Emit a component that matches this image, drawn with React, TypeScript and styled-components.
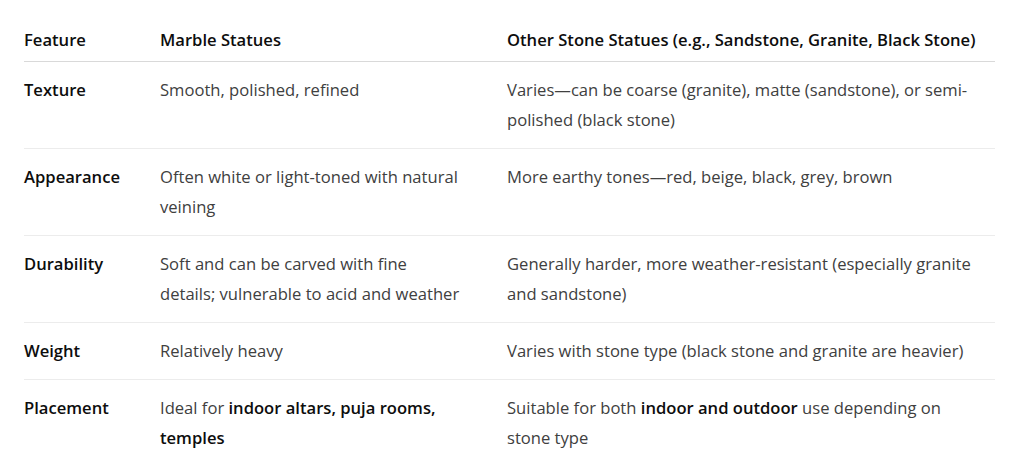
import styled, { createGlobalStyle } from "styled-components";

const GlobalStyle = createGlobalStyle`
  body {
    margin: 0;
    background: #ffffff;
    font-family: "Open Sans", "Noto Sans", "Liberation Sans", sans-serif;
  }
`;

const Page = styled.div`
  padding: 13px 0 0 24px;
`;

const Table = styled.table`
  width: 971px;
  table-layout: fixed;
  border-collapse: collapse;
  font-size: 16.6px;
  line-height: 30px;
`;

const HeadCell = styled.th<{ $width?: number }>`
  width: ${(p) => (p.$width ? `${p.$width}px` : "auto")};
  text-align: left;
  font-weight: 600;
  color: #0d0d0d;
  padding: 12px 0 6px;
  border-bottom: 1px solid #d9d9d9;
`;

const Row = styled.tr`
  & + & td {
    border-top: 1px solid #ececec;
  }
`;

const Cell = styled.td<{ $label?: boolean }>`
  vertical-align: top;
  padding: 13px 0 13px;
  font-weight: ${(p) => (p.$label ? 600 : 400)};
  color: ${(p) => (p.$label ? "#0d0d0d" : "#404040")};
  b {
    font-weight: 600;
    color: #0d0d0d;
  }
`;

interface RowData {
  feature: string;
  marble: React.ReactNode;
  other: React.ReactNode;
}

const rows: RowData[] = [
  {
    feature: "Texture",
    marble: "Smooth, polished, refined",
    other: (
      <>
        Varies—can be coarse (granite), matte (sandstone), or semi-
        <br />
        polished (black stone)
      </>
    ),
  },
  {
    feature: "Appearance",
    marble: (
      <>
        Often white or light-toned with natural
        <br />
        veining
      </>
    ),
    other: "More earthy tones—red, beige, black, grey, brown",
  },
  {
    feature: "Durability",
    marble: (
      <>
        Soft and can be carved with fine
        <br />
        details; vulnerable to acid and weather
      </>
    ),
    other: (
      <>
        Generally harder, more weather-resistant (especially granite
        <br />
        and sandstone)
      </>
    ),
  },
  {
    feature: "Weight",
    marble: "Relatively heavy",
    other: "Varies with stone type (black stone and granite are heavier)",
  },
  {
    feature: "Placement",
    marble: (
      <>
        Ideal for <b>indoor altars, puja rooms,</b>
        <br />
        <b>temples</b>
      </>
    ),
    other: (
      <>
        Suitable for both <b>indoor and outdoor</b> use depending on
        <br />
        stone type
      </>
    ),
  },
];

function App() {
  return (
    <>
      <GlobalStyle />
      <Page>
        <Table>
          <thead>
            <tr>
              <HeadCell $width={136}>Feature</HeadCell>
              <HeadCell $width={347}>Marble Statues</HeadCell>
              <HeadCell>Other Stone Statues (e.g., Sandstone, Granite, Black Stone)</HeadCell>
            </tr>
          </thead>
          <tbody>
            {rows.map((r) => (
              <Row key={r.feature}>
                <Cell $label>{r.feature}</Cell>
                <Cell>{r.marble}</Cell>
                <Cell>{r.other}</Cell>
              </Row>
            ))}
          </tbody>
        </Table>
      </Page>
    </>
  );
}

export default App;
